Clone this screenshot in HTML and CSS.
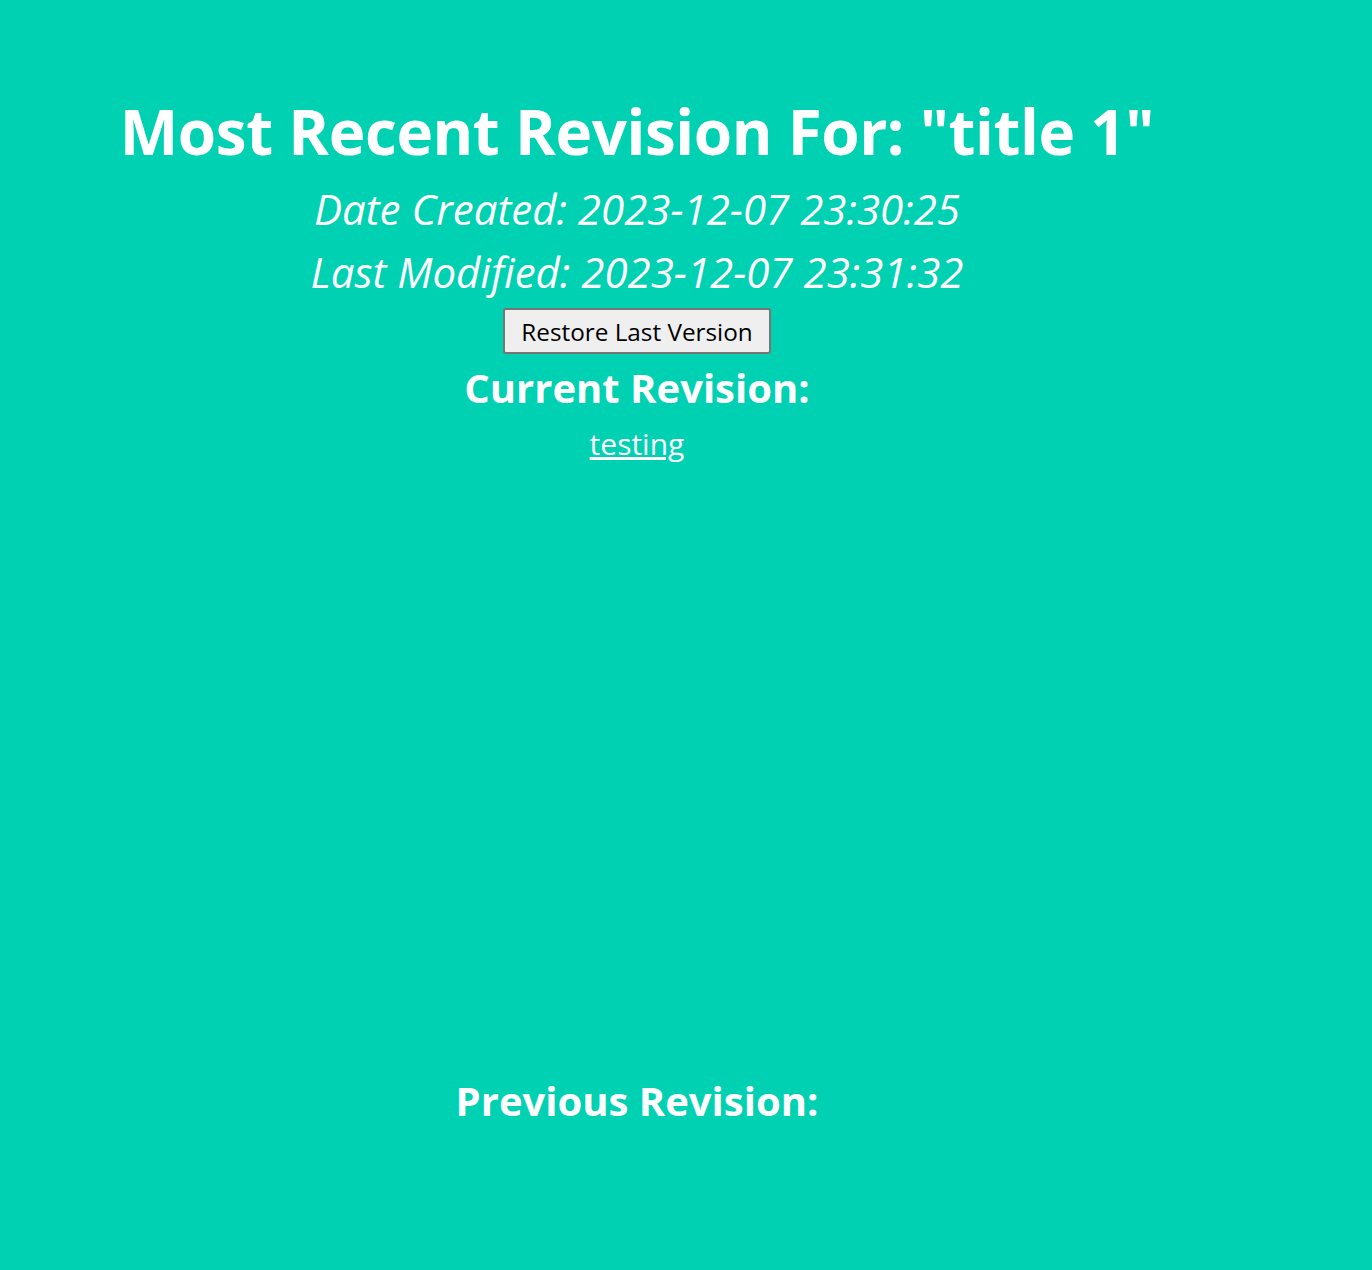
FILE: index.html
```html
<!DOCTYPE html>
<html lang="en">
<head>
<meta charset="utf-8">
<title>Revision</title>
<link rel="stylesheet" href="styles.css">
</head>
<body>
<main class="page">
  <h1 class="title">Most Recent Revision For: "title 1"</h1>
  <p class="meta meta-first">Date Created: 2023-12-07 23:30:25</p>
  <p class="meta">Last Modified: 2023-12-07 23:31:32</p>
  <button class="restore" type="button">Restore Last Version</button>
  <h2 class="section">Current Revision:</h2>
  <a class="content-link" href="#">testing</a>
  <div class="content-space"></div>
  <h2 class="section">Previous Revision:</h2>
</main>
</body>
</html>
```
FILE: styles.css
```css
html, body {
  margin: 0;
  padding: 0;
}
body {
  background: #00d1b2;
  color: #ffffff;
  font-family: "Open Sans", "Noto Sans", sans-serif;
  min-height: 1270px;
}
.page {
  width: 1274px;
  display: flex;
  flex-direction: column;
  align-items: center;
  text-align: center;
}
.title {
  margin: 91px 0 0;
  font-size: 62px;
  line-height: 80px;
  font-weight: 700;
  letter-spacing: -0.45px;
}
.meta {
  margin: 0;
  font-size: 42px;
  line-height: 63px;
  font-style: italic;
  font-weight: 400;
}
.meta-first {
  margin-top: 6px;
}
.restore {
  margin-top: 5px;
  height: 46px;
  padding: 0 16px;
  font-family: "Open Sans", "Noto Sans", sans-serif;
  font-size: 24.3px;
  color: #000;
  background: #efefef;
  border: 2px solid #767676;
  border-radius: 3px;
}
.section {
  margin: 9px 0 0;
  font-size: 40px;
  line-height: 50px;
  font-weight: 700;
}
.content-link {
  margin-top: 11px;
  font-size: 30px;
  line-height: 40px;
  color: #ffffff;
  text-decoration: underline;
}
.content-space {
  height: 603px;
}
```
